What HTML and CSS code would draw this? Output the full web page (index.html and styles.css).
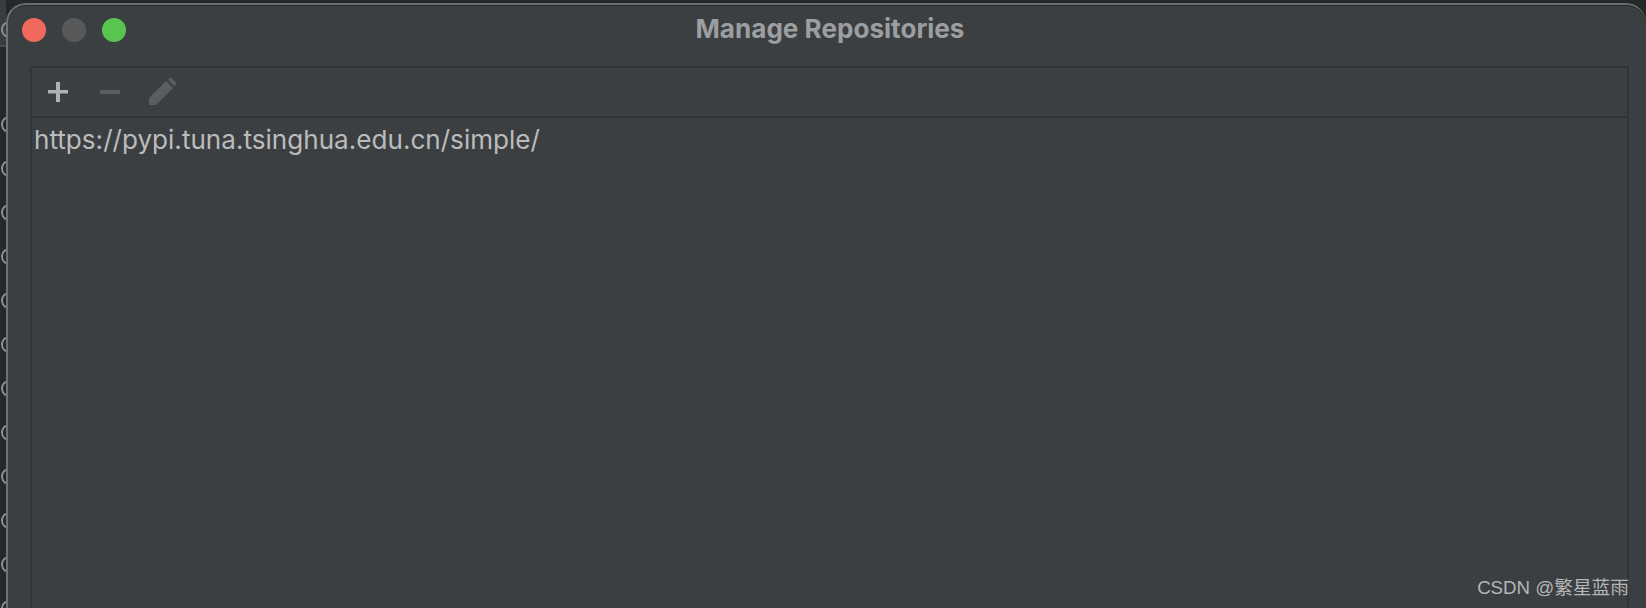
FILE: index.html
```html
<!DOCTYPE html>
<html lang="en">
<head>
	<meta charset="utf-8">
	<title>Manage Repositories</title>
	<link rel="stylesheet" href="styles.css">
</head>
<body>
	<div class="behind">
		<div class="behind-head">
			<span class="behind-mark"></span>
		</div>
		<div class="behind-list">
			<span class="behind-mark"></span>
			<span class="behind-mark"></span>
			<span class="behind-mark"></span>
			<span class="behind-mark"></span>
			<span class="behind-mark"></span>
			<span class="behind-mark"></span>
			<span class="behind-mark"></span>
			<span class="behind-mark"></span>
			<span class="behind-mark"></span>
			<span class="behind-mark"></span>
			<span class="behind-mark"></span>
			<span class="behind-mark"></span>
		</div>
	</div>
	<div class="window">
		<div class="titlebar">
			<div class="lights">
				<span class="light red"></span>
				<span class="light grey"></span>
				<span class="light green"></span>
			</div>
			<div class="title">Manage Repositories</div>
		</div>
		<div class="panel">
			<div class="toolbar">
				<svg class="tool" width="24" height="24" viewBox="0 0 24 24">
					<path d="M10 2h4v8h8v3.500h-8V22h-4v-8.500H2V10h8z" fill="#afb1b3"/>
				</svg>
				<svg class="tool" width="24" height="24" viewBox="0 0 24 24">
					<rect x="2" y="10" width="20" height="4" fill="#5b5d5f"/>
				</svg>
				<svg class="tool pencil" width="30" height="30" viewBox="0 0 30 30">
					<path d="M1 28v-7L18 4l7 7L8 28zM20 2.500l1.500-1.500q1-.8 2 0l4.500 4.500q.8 1 0 2L26 9z" fill="#5b5d5f"/>
				</svg>
			</div>
			<div class="repo-list">
				<div class="repo">https://pypi.tuna.tsinghua.edu.cn/simple/</div>
			</div>
		</div>
	</div>
	<div class="watermark">CSDN @繁星蓝雨</div>
</body>
</html>
```

FILE: styles.css
```css
html, body {
	margin: 0;
	height: 100%;
}

body {
	display: flex;
	width: 1646px;
	height: 608px;
	overflow: hidden;
	background: #26292b;
	font-family: Inter, "Liberation Sans", sans-serif;
	position: relative;
}

.behind {
	flex: none;
	width: 6px;
	overflow: hidden;
}

.behind-head {
	height: 47px;
	padding-top: 22px;
	box-sizing: border-box;
	background: #3a3c3e;
	border-bottom: 2px solid #4a4c4e;
}

.behind-list {
	display: flex;
	flex-direction: column;
	padding-top: 70px;
}

.behind-mark {
	display: block;
	flex: none;
	box-sizing: border-box;
	width: 12px;
	height: 15px;
	margin-left: 1px;
	margin-bottom: 29px;
	border: 2px solid #8c8e90;
	border-radius: 50%;
}

.window {
	flex: none;
	width: 1640px;
	height: 605px;
	margin-top: 3px;
	box-sizing: border-box;
	background: #3c3f41;
	border-top: 2px solid #6a6c6e;
	border-left: 2px solid #6f7173;
	border-top-left-radius: 20px;
	border-top-right-radius: 20px;
	box-shadow: inset 0 1px 0 #26282a;
}

.titlebar {
	height: 61px;
	display: flex;
	align-items: center;
	justify-content: center;
	position: relative;
}

.lights {
	position: absolute;
	left: 14px;
	top: 13px;
	display: flex;
	gap: 16px;
}

.light {
	width: 24px;
	height: 24px;
	border-radius: 50%;
}

.red { background: #f1695d; }
.grey { background: #58595b; }
.green { background: #5ac451; }

.title {
	margin-top: -15px;
	margin-left: 6px;
	font-size: 26.100px;
	font-weight: 700;
	color: #9c9ea0;
}

.panel {
	margin-left: 22px;
	width: 1599px;
	height: 542px;
	box-sizing: border-box;
	border: 2px solid #323435;
	border-bottom: none;
}

.toolbar {
	height: 50px;
	box-sizing: border-box;
	border-bottom: 2px solid #323435;
	display: flex;
	align-items: center;
	padding-left: 14px;
	gap: 28px;
}

.pencil {
	margin-left: -2px;
}

.repo-list {
	padding: 6px 2px;
}

.repo {
	font-size: 26.100px;
	line-height: 32px;
	color: #bbbbbb;
}

.watermark {
	position: absolute;
	right: 17px;
	bottom: 9px;
	font-family: "Liberation Sans", "Noto Sans CJK SC", sans-serif;
	font-size: 18.700px;
	color: #b4b6b8;
}
```
